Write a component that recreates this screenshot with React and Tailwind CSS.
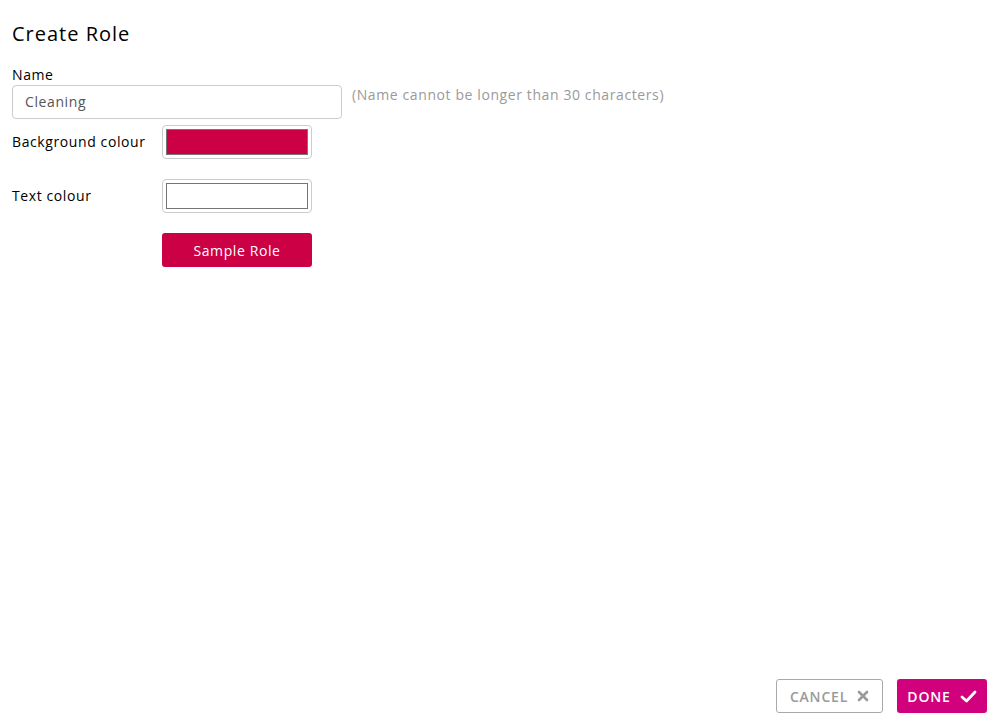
import React, { useState } from 'react';

const font = { fontFamily: '"Open Sans", "DejaVu Sans", sans-serif' };

const ColourField = ({ value }) => (
  <div className="w-[150px] h-[34px] p-[3px] border border-[#cccccc] rounded-[4px] bg-white flex">
    <div className="flex-1 border border-[#767676]" style={{ background: value }} />
  </div>
);

const App = () => {
  const [name, setName] = useState('Cleaning');
  const bg = '#cc0044';
  const fg = '#ffffff';

  return (
    <div className="h-screen w-full bg-white flex flex-col text-black" style={font}>
      <div className="flex-1 px-3 pt-[21px]">
        <h1 className="text-[20px] leading-[26px] font-medium tracking-[1px]">Create Role</h1>

        {/* Name */}
        <div className="mt-[19px]">
          <label className="block text-[14px] leading-[18px] font-medium tracking-[0.6px]">Name</label>
          <div className="flex items-center gap-[10px] mt-[1px]">
            <input
              value={name}
              onChange={(e) => setName(e.target.value)}
              className="w-[330px] h-[34px] px-3 pb-[2px] border border-[#cccccc] rounded-[4px] text-[14px] text-[#555] tracking-[0.6px] outline-none"
            />
            <span className="text-[14px] text-[#9a9a9a] tracking-[0.6px] -mt-[15px]">(Name cannot be longer than 30 characters)</span>
          </div>
        </div>

        {/* Colours */}
        <div className="grid grid-cols-[150px_150px] gap-y-[20px] mt-[6px] items-center">
          <span className="text-[14px] font-medium tracking-[0.6px] -mt-[2px]">Background colour</span>
          <ColourField value={bg} />
          <span className="text-[14px] font-medium tracking-[0.6px] -mt-[2px]">Text colour</span>
          <ColourField value={fg} />
          <span />
          <button
            type="button"
            className="h-[34px] rounded-[3px] text-[14px] font-medium tracking-[0.6px]"
            style={{ background: bg, color: fg }}
          >
            Sample Role
          </button>
        </div>
      </div>

      {/* Footer */}
      <div className="flex justify-end gap-[14px] pr-[14px] pb-[12px]">
        <button
          type="button"
          className="h-[34px] w-[107px] border border-[#aaaaaa] rounded-[3px] flex items-center justify-center gap-[9px] text-[14px] font-semibold text-[#9a9a9a] tracking-[0.8px]"
        >
          CANCEL
          <svg width="12" height="12" viewBox="0 0 12 12">
            <path d="M2 2 L10 10 M10 2 L2 10" stroke="#9a9a9a" strokeWidth="2.6" strokeLinecap="round" />
          </svg>
        </button>
        <button
          type="button"
          className="h-[34px] w-[90px] bg-[#d1007d] rounded-[3px] flex items-center justify-center gap-[9px] text-[14px] font-semibold text-white tracking-[0.8px]"
        >
          DONE
          <svg width="17" height="13" viewBox="0 0 17 13">
            <path d="M2 7 L6.5 11 L15 2" stroke="#ffffff" strokeWidth="2.8" fill="none" strokeLinecap="round" strokeLinejoin="round" />
          </svg>
        </button>
      </div>
    </div>
  );
};

export default App;
